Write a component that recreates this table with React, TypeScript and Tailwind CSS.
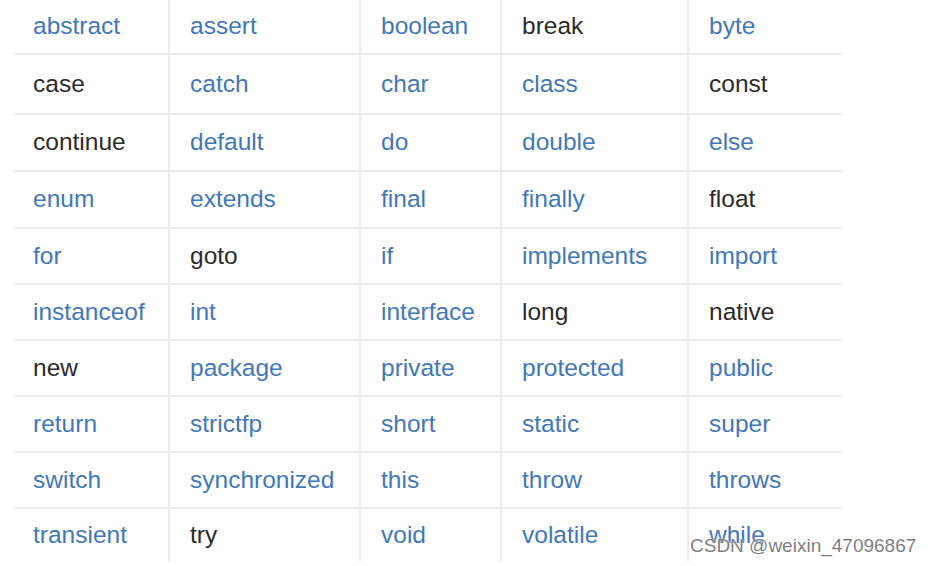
import React from "react";

const BLUE = "blue";
const DARK = "dark";

type Word = [string, string];

const rows: Word[][] = [
  [["abstract", BLUE], ["assert", BLUE], ["boolean", BLUE], ["break", DARK], ["byte", BLUE]],
  [["case", DARK], ["catch", BLUE], ["char", BLUE], ["class", BLUE], ["const", DARK]],
  [["continue", DARK], ["default", BLUE], ["do", BLUE], ["double", BLUE], ["else", BLUE]],
  [["enum", BLUE], ["extends", BLUE], ["final", BLUE], ["finally", BLUE], ["float", DARK]],
  [["for", BLUE], ["goto", DARK], ["if", BLUE], ["implements", BLUE], ["import", BLUE]],
  [["instanceof", BLUE], ["int", BLUE], ["interface", BLUE], ["long", DARK], ["native", DARK]],
  [["new", DARK], ["package", BLUE], ["private", BLUE], ["protected", BLUE], ["public", BLUE]],
  [["return", BLUE], ["strictfp", BLUE], ["short", BLUE], ["static", BLUE], ["super", BLUE]],
  [["switch", BLUE], ["synchronized", BLUE], ["this", BLUE], ["throw", BLUE], ["throws", BLUE]],
  [["transient", BLUE], ["try", DARK], ["void", BLUE], ["volatile", BLUE], ["while", BLUE]],
];

// row heights measured off the screenshot (border included)
const rowHeights = ["h-[55px]", "h-[60px]", "h-[57px]", "h-[57px]", "h-[56px]", "h-[56px]", "h-[56px]", "h-[56px]", "h-[56px]", "h-[52px]"];

export default function App() {
  return (
    <div className="relative w-[932px] h-[566px] overflow-hidden bg-white font-['Liberation_Sans',Arial,sans-serif]">
      {/* Keyword table */}
      <div className="ml-[14px] grid grid-cols-[154px_191px_141px_187px_155px]">
        {rows.map((row, r) =>
          row.map(([word, tone], c) => (
            <div
              key={word}
              className={`flex items-center ${rowHeights[r]} ${r < rows.length - 1 ? "border-b-2 border-[#ebebeb]" : ""} ${c > 0 ? "border-l-2 border-l-[#ebebeb] pl-[20px]" : "pl-[19px]"}`}
            >
              <span
                className={`text-[24.5px] leading-none ${tone === BLUE ? "text-[#4277b9]" : "text-[#2b2b2b]"}`}
              >
                {word}
              </span>
            </div>
          ))
        )}
      </div>

      {/* Watermark */}
      <div className="absolute left-[690px] top-[536px] text-[19px] leading-none text-[#7f7f7f] [text-shadow:0_0_2px_#fff]">
        CSDN @weixin_47096867
      </div>
    </div>
  );
}
